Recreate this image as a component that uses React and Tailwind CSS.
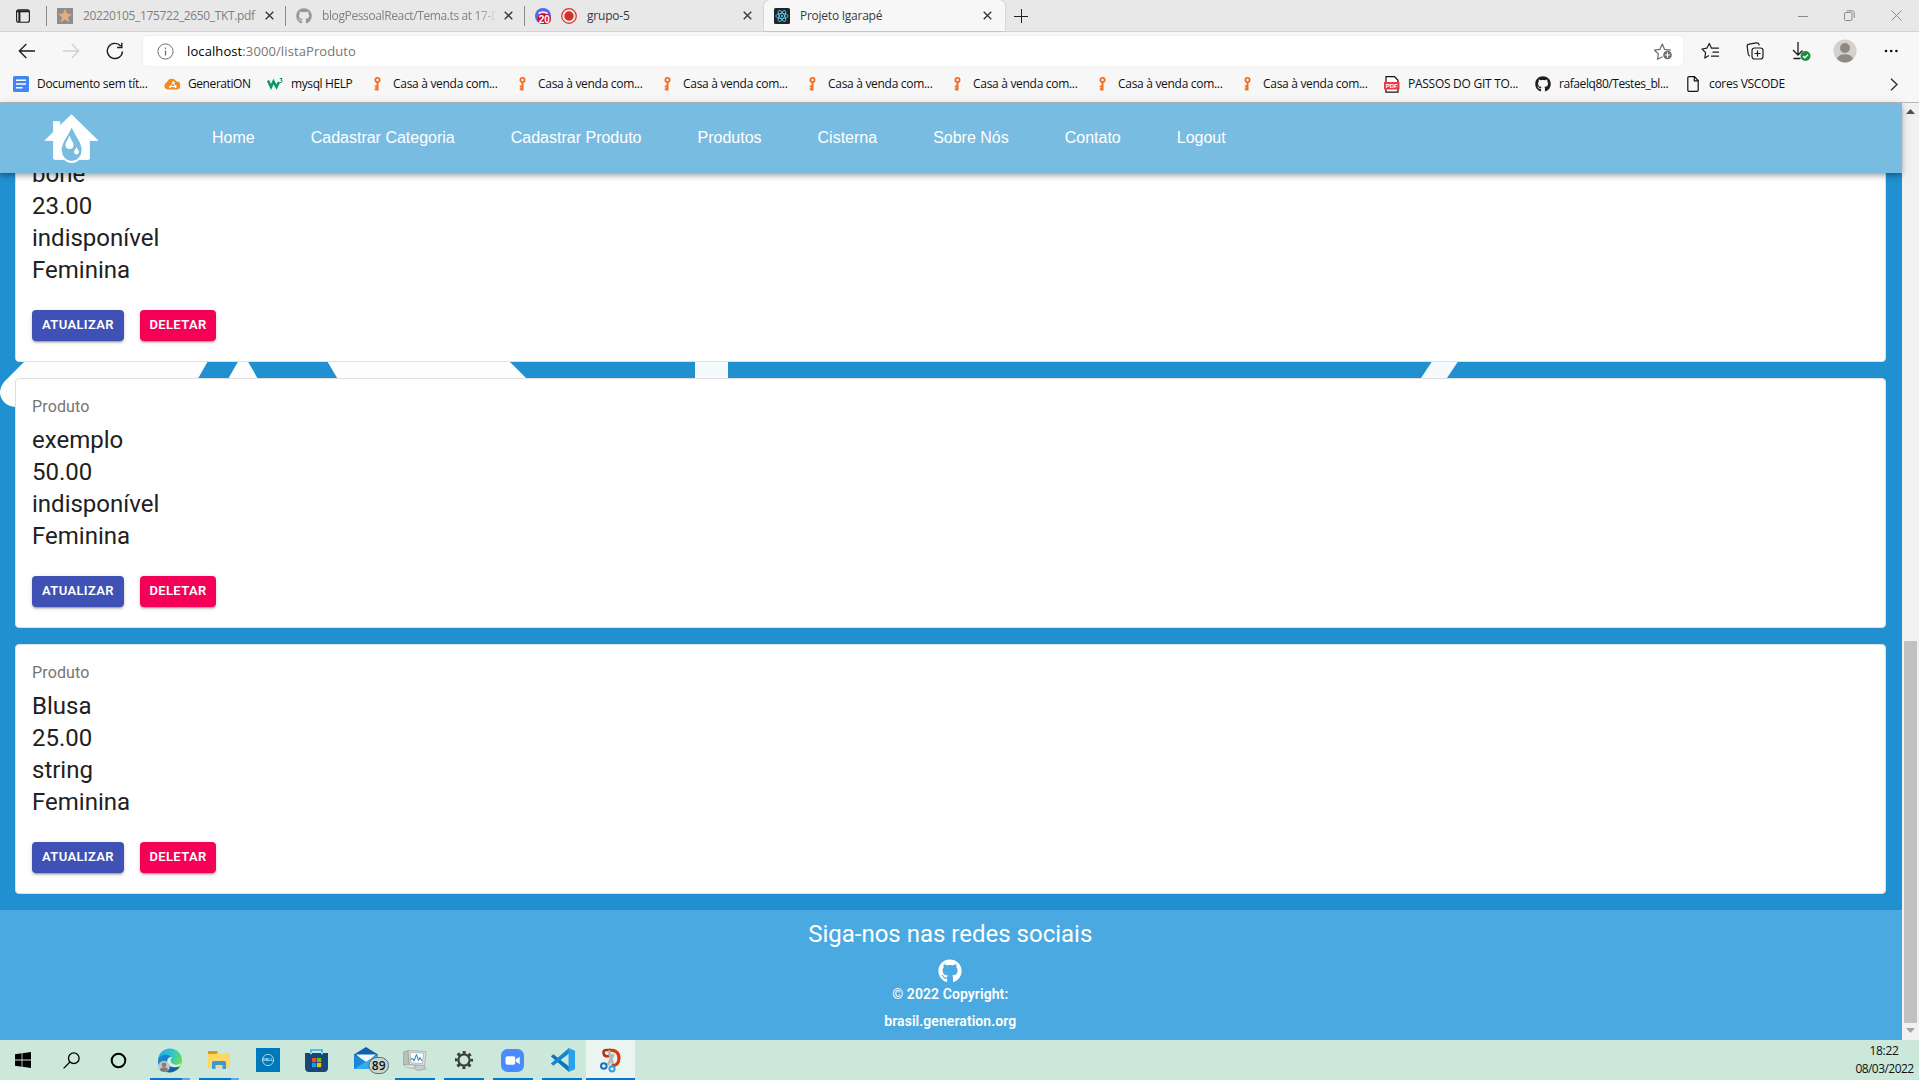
import React from "react";
import { FaGithub } from "react-icons/fa";

const UI = "font-['Open_Sans',sans-serif]";

function Close() {
  return (
    <svg width="9" height="9" viewBox="0 0 9 9" className="shrink-0" stroke="#333" strokeWidth="1.3">
      <path d="M.7.7l7.6 7.6M8.3.7L.7 8.3" />
    </svg>
  );
}

function Tab({ icons, title, titleClass, muted, active, fade }) {
  return (
    <div
      className={`flex h-full shrink-0 items-center pl-[10px] ${
        active ? "relative w-[241px] rounded-t-md bg-[#f7f7f7] pr-[13px] shadow-[0_0_2px_rgba(0,0,0,0.25)]" : "w-[239px] pr-[12px]"
      }`}
    >
      <div className="flex shrink-0 gap-[10px]">{icons}</div>
      <div
        className={`ml-[10px] min-w-0 flex-1 overflow-hidden whitespace-nowrap text-[12px] leading-4 ${titleClass} ${
          muted ? "text-[#808080]" : "text-[#3a3a3a]"
        } ${fade ? "mr-[6px] [mask-image:linear-gradient(to_right,black_88%,transparent_100%)]" : ""}`}
      >
        {title}
      </div>
      <Close />
    </div>
  );
}

function Key() {
  return (
    <svg width="16" height="16" viewBox="0 0 16 16" fill="none" stroke="#f36d21">
      <circle cx="8.5" cy="4" r="2.1" strokeWidth="1.8" />
      <path d="M8.5 6v8.5" strokeWidth="2" />
      <path d="M5.800 10.400h2.500M5.800 13.200h2.500" strokeWidth="2" />
    </svg>
  );
}

function Bookmark({ icon, label, width, spacing }) {
  return (
    <div className={`flex shrink-0 items-center gap-2 ${width}`}>
      <span className="flex w-4 shrink-0 justify-center">{icon}</span>
      <span className={`whitespace-nowrap ${spacing || "tracking-[-0.3px]"}`}>{label}</span>
    </div>
  );
}

function StarIcon({ children, color = "#1b1b1b" }) {
  return (
    <svg width="20" height="20" viewBox="0 0 20 20" fill="none" stroke={color} strokeWidth="1.2" strokeLinejoin="round" strokeLinecap="round">
      {children}
    </svg>
  );
}

function TabStrip() {
  return (
    <div className="flex h-8 items-center border-b border-[#d3d3d3] bg-[#e8e8e8]">
      <div className="flex w-[46px] items-center justify-center">
        <svg width="14" height="14" viewBox="0 0 14 14" fill="none" stroke="#1b1b1b" strokeWidth="1.1">
          <rect x=".6" y=".8" width="12.8" height="12.4" rx="2" />
          <path d="M1 2.200h12M3.400 3v10" strokeWidth="2" />
        </svg>
      </div>
      <div className="h-5 w-px bg-[#8a8a8a]" />
      <Tab
        muted
        titleClass="tracking-[-0.36px]"
        title="20220105_175722_2650_TKT.pdf"
        icons={
          <svg width="16" height="16" viewBox="0 0 16 16">
            <path fill="#8d8d8d" d="M0 0h16v16H0z" />
            <path fill="#e0b07c" d="M8 .8l1.900 4.800 5.100.3-4 3.300 1.400 5.200L8 11.600l-4.400 2.800L5 9.200 1 5.900l5.100-.3z" />
          </svg>
        }
      />
      <div className="-ml-px h-5 w-px bg-[#8a8a8a]" />
      <Tab muted fade titleClass="tracking-[-0.38px]" title="blogPessoalReact/Tema.ts at 17-D" icons={<FaGithub size={16} color="#979797" />} />
      <div className="-ml-px h-5 w-px bg-[#8a8a8a]" />
      <Tab
        titleClass="tracking-[-0.2px]"
        title="grupo-5"
        icons={
          <>
            <svg width="16" height="16" viewBox="0 0 16 16">
              <circle cx="8" cy="8" r="8" fill="#5865f2" />
              <path d="M3.500 5.500q4.500-3 9 0" stroke="#fff" fill="none" strokeWidth="1.600" />
              <rect x="2.500" y="6" width="13.500" height="10" rx="5" fill="#d40f19" />
              <text x="9.300" y="14.500" textAnchor="middle" fontSize="10" fontWeight="700" fontFamily="Liberation Sans" fill="#fff">20</text>
            </svg>
            <svg width="16" height="16" viewBox="0 0 16 16">
              <circle cx="8" cy="8" r="7.300" fill="none" stroke="#d93025" strokeWidth="1.200" />
              <circle cx="8" cy="8" r="4.700" fill="#d93025" />
            </svg>
          </>
        }
      />
      <Tab
        active
        titleClass="tracking-[-0.25px]"
        title="Projeto Igarapé"
        icons={
          <svg width="16" height="16" viewBox="0 0 16 16" fill="none" stroke="#61dafb" strokeWidth=".8">
            <rect width="16" height="16" rx="1.500" fill="#20232a" stroke="none" />
            <ellipse cx="8" cy="8" rx="6.200" ry="2.500" />
            <ellipse cx="8" cy="8" rx="6.200" ry="2.500" transform="rotate(60 8 8)" />
            <ellipse cx="8" cy="8" rx="6.200" ry="2.500" transform="rotate(120 8 8)" />
            <circle cx="8" cy="8" r="1" fill="#61dafb" stroke="none" />
          </svg>
        }
      />
      <svg width="14" height="14" viewBox="0 0 14 14" className="ml-[9px]" stroke="#222" strokeWidth="1">
        <path d="M7.500 0v14M0 7.500h14" />
      </svg>
      <div className="ml-auto flex items-center gap-[36px] pr-[17px]">
        <svg width="10" height="10" viewBox="0 0 10 10" stroke="#888"><path d="M0 5.500h10" /></svg>
        <svg width="11" height="11" viewBox="0 0 11 11" fill="none" stroke="#888">
          <rect x=".5" y="2.500" width="7.500" height="8" rx="1.200" />
          <path d="M2.800.8h5.200q2.200 0 2.200 2.200v5" />
        </svg>
        <svg width="11" height="11" viewBox="0 0 11 11" stroke="#888"><path d="M.5.5l10 10M10.500.5l-10 10" /></svg>
      </div>
    </div>
  );
}

function Toolbar() {
  return (
    <div className="flex h-[38px] items-center bg-[#f7f7f7]">
      <div className="flex w-[143px] items-center gap-[26px] pl-[18px]">
        <svg width="18" height="16" viewBox="0 0 18 16" fill="none" stroke="#1b1b1b" strokeWidth="1.300"><path d="M17 8H1.500M8.300 1L1.300 8l7 7" /></svg>
        <svg width="18" height="16" viewBox="0 0 18 16" fill="none" stroke="#cfcfcf" strokeWidth="1.300"><path d="M1 8h15.500M9.700 1l7 7-7 7" /></svg>
        <svg width="18" height="18" viewBox="0 0 18 18" fill="none" stroke="#1b1b1b" strokeWidth="1.400"><path d="M16.500 9.500A7.600 7.600 0 1 1 14.700 4M15.800.8v4.700h-4.700" /></svg>
      </div>
      <div className="flex h-[30px] w-[1540px] items-center rounded-[4px] bg-white pl-[14px] pr-[10px] shadow-[0_0_2px_rgba(0,0,0,0.1)]">
        <svg width="17" height="17" viewBox="0 0 17 17" fill="none" stroke="#6b6b6b"><circle cx="8.500" cy="8.500" r="7.600" /><path d="M8.500 7.500v5M8.500 4.500v1.400" strokeWidth="1.200" /></svg>
        <span className="ml-[13px] text-[13px] leading-5 tracking-[0.1px] text-[#767676]">
          <span className="text-black">localhost</span>:3000/listaProduto
        </span>
        <div className="ml-auto">
          <StarIcon color="#6b6b6b">
            <path d="M9 16l-4.500 2.300.9-5.400-3.900-3.700 5.300-.8L9.300 3l2.300 5.400 5.600.8" />
            <circle cx="14.500" cy="14" r="4.300" fill="#6b6b6b" stroke="none" />
            <path d="M14.500 11.800v4.400M12.300 14h4.400" stroke="#fff" />
          </StarIcon>
        </div>
      </div>
      <div className="flex flex-1 items-center pl-[18px]">
        <StarIcon>
          <path d="M7.500 14.800L3.800 17l.8-5.300L1 8l4.800-.8L8.300 2.500l2.200 4.700h7M12 11.200h5.500M10.500 15.200h7" />
        </StarIcon>
        <svg width="20" height="20" viewBox="0 0 20 20" className="ml-[24px]" fill="none" stroke="#1b1b1b" strokeWidth="1.200">
          <rect x="7" y="7" width="11" height="11" rx="2.500" />
          <path d="M12.500 9.500v6M9.500 12.500h6M4.800 15.200Q3.500 14.500 3.200 13L2.200 5.500Q2 3.500 4 3.200l7.500-1.400Q13.500 1.600 14 3.500l.2.800" />
        </svg>
        <svg width="20" height="20" viewBox="0 0 20 20" className="ml-[26px]" fill="none" stroke="#1b1b1b" strokeWidth="1.300">
          <path d="M7 1v12.500M2 9l5 5 4.500-4.500M2.500 17.500h7" />
          <circle cx="14.500" cy="15" r="5" fill="#1e8e3e" stroke="none" />
          <path d="M12 15l1.800 1.800 3.200-3.200" stroke="#fff" />
        </svg>
        <svg width="24" height="24" viewBox="0 0 24 24" className="ml-[22px]">
          <circle cx="12" cy="12" r="11.500" fill="#d3d0cd" />
          <circle cx="12" cy="9" r="5" fill="#8f8984" />
          <path d="M4 19.500Q6 15.200 12 15.200t8 4.300Q17 23.500 12 23.500T4 19.500z" fill="#8f8984" />
        </svg>
        <svg width="14" height="4" viewBox="0 0 14 4" className="ml-[27px]" fill="#111"><circle cx="2" cy="2" r="1.300" /><circle cx="7.200" cy="2" r="1.300" /><circle cx="12.400" cy="2" r="1.300" /></svg>
      </div>
    </div>
  );
}

function Bookmarks() {
  return (
    <div className="flex h-[33px] items-center border-b border-[#b9b9b9] bg-[#f7f7f7] pb-[4px] pl-[13px] text-[12px] text-[#111]">
      <Bookmark
        width="w-[151px]"
        label="Documento sem tít..."
        icon={
          <svg width="16" height="16" viewBox="0 0 16 16"><rect width="16" height="16" rx="1.500" fill="#4285f4" /><path d="M3 4.200h10M3 8h10M3 11.800h6.500" stroke="#fff" strokeWidth="1.600" /></svg>
        }
      />
      <Bookmark
        width="w-[103px]"
        label="GeneratiON"
        spacing="tracking-[-0.42px]"
        icon={
          <svg width="16" height="16" viewBox="0 0 16 16"><path d="M3.500 13.500A3.700 3.700 0 0 1 3 6.300 5.200 5.200 0 0 1 12.500 5.500 4 4 0 0 1 12.800 13.500z" fill="#f68a1f" /><path d="M6.500 10.500l3-4 2 4z" fill="none" stroke="#fff" /><circle cx="9.300" cy="6.500" r="1.200" fill="#fff" /><circle cx="6.300" cy="10.700" r="1.200" fill="#fff" /><circle cx="11.500" cy="10.700" r="1.200" fill="#fff" /></svg>
        }
      />
      <Bookmark
        width="w-[102px]"
        label="mysql HELP"
        spacing="tracking-[-0.4px]"
        icon={
          <svg width="16" height="16" viewBox="0 0 16 16" fill="none" stroke="#059862"><path d="M1 4.500l3 6.500L6.500 5.500l3 5.500 2.500-5" strokeWidth="2.500" /><path d="M12.800 2.500h2.400l-1.300 1.700q1.600.2 1.200 1.500t-2.300.8" strokeWidth="1" /></svg>
        }
      />
      {[0, 1, 2, 3, 4, 5, 6].map((i) => (
        <Bookmark key={i} width="w-[145px]" label="Casa à venda com..." icon={<Key />} />
      ))}
      <Bookmark
        width="w-[151px]"
        label="PASSOS DO GIT TO..."
        spacing="tracking-[-0.27px]"
        icon={
          <svg width="16" height="17" viewBox="0 0 16 17"><path d="M2 .7h8.500L14 4.300V16.200H2z" fill="#fff" stroke="#111" strokeWidth="1.200" /><path fill="#f4373b" d="M0 6h15.500v7.500H0z" /><text x="7.700" y="12.200" fontSize="6" fontWeight="700" textAnchor="middle" fontFamily="Liberation Sans" fill="#fff">PDF</text></svg>
        }
      />
      <Bookmark width="w-[150px]" spacing="tracking-[-0.42px]" label="rafaelq80/Testes_bl..." icon={<FaGithub size={16} color="#1b1f23" />} />
      <Bookmark
        width="w-[120px]"
        label="cores VSCODE"
        icon={
          <svg width="12" height="16" viewBox="0 0 12 16" fill="none" stroke="#111" strokeWidth="1.200"><path d="M.8 2Q.8.700 2 .700h5.500l3.700 3.800V14q0 1.300-1.300 1.300H2Q.8 15.300.8 14zM7.300.8v4h4" /></svg>
        }
      />
      <svg width="8" height="13" viewBox="0 0 8 13" className="ml-auto mr-[21px]" fill="none" stroke="#333" strokeWidth="1.400"><path d="M1 .7l6 5.800-6 5.800" /></svg>
    </div>
  );
}

const NAV = ["Home", "Cadastrar Categoria", "Cadastrar Produto", "Produtos", "Cisterna", "Sobre Nós", "Contato", "Logout"];

function SiteHeader() {
  return (
    <header className="relative z-10 flex h-[70px] shrink-0 items-center bg-[#79bce2] shadow-[0_2px_4px_-1px_rgba(0,0,0,0.2),0_4px_5px_0_rgba(0,0,0,0.14),0_1px_10px_0_rgba(0,0,0,0.12)]">
      <svg width="55" height="50" viewBox="0 0 55 50" className="ml-[44px] mt-px shrink-0">
        <path d="M27.500.7L54 26.500H45.500V44q0 1.500-1.500 1.500H11q-1.500 0-1.500-1.500V26.500H1L9.500 18V7.500h6.300v4.300z" fill="#fff" stroke="#fff" strokeWidth=".8" strokeLinejoin="round" />
        <path d="M27.700 13.500C24 22.500 17.500 28.500 17.500 37.500a10.200 10.200 0 0 0 20.400 0C37.900 28.500 31.400 22.500 27.700 13.500z" fill="#79bce2" />
        <path d="M17 36.500a10.700 11.500 0 0 0 21.400 0" fill="none" stroke="#fff" strokeWidth="1.800" />
        <path d="M25.500 21.500c-1.200 4-4 6.500-4 9.500a4 4 0 0 0 8 0c0-3-2.800-5.500-4-9.500zM32.500 33c-.8 2.200-2.400 3.200-2.400 5a2.400 2.400 0 0 0 4.800 0c0-1.800-1.600-2.800-2.400-5z" fill="#fff" />
      </svg>
      <nav className="ml-[113px] flex gap-14 whitespace-nowrap font-['Liberation_Sans',sans-serif] text-base leading-6 text-white">
        {NAV.map((n) => (
          <a key={n}>{n}</a>
        ))}
      </nav>
    </header>
  );
}

function Card({ lines }) {
  return (
    <article className="shrink-0 rounded-[4px] border border-[#dfdfdf] bg-white text-[#212121]">
      <div className="p-4">
        <p className="mb-[5.6px] text-base leading-6 tracking-[0.15px] text-[#757575]">Produto</p>
        {lines.map((l) => (
          <h5 key={l} className="text-2xl leading-[32px]">{l}</h5>
        ))}
      </div>
      <div className="p-2">
        <div className="mb-3 flex gap-4 px-2 text-[13px] font-semibold leading-[22.75px] tracking-[0.37px] text-white">
          <button className="h-[30.75px] w-[92px] rounded-[4px] bg-[#3f51b5] text-center shadow-[0_3px_1px_-2px_rgba(0,0,0,0.2),0_2px_2px_0_rgba(0,0,0,0.14),0_1px_5px_0_rgba(0,0,0,0.12)]">ATUALIZAR</button>
          <button className="h-[30.75px] w-[76px] rounded-[4px] bg-[#f50057] text-center shadow-[0_3px_1px_-2px_rgba(0,0,0,0.2),0_2px_2px_0_rgba(0,0,0,0.14),0_1px_5px_0_rgba(0,0,0,0.12)]">DELETAR</button>
        </div>
      </div>
    </article>
  );
}

function Backdrop() {
  return (
    <svg width="1902" height="737" viewBox="0 173 1902 737" className="absolute left-0 top-0">
      <path fill="#fcfefe" d="M26 360L4 382Q-4 393 4 402Q8 407 18 407H182L208.500 360z" />
      <path fill="#fcfefe" d="M243 353L220 393H266zM326.500 360L346 393H541L508 360z" />
      <path fill="#f5fafd" d="M695 350h33v40h-33zM1433 360h26l-20 30h-26z" />
    </svg>
  );
}

function Footer() {
  return (
    <footer className="flex h-[130px] shrink-0 flex-col items-center bg-[#4ba9e1] pr-[1.5px] pt-[8px] text-white">
      <h5 className="text-2xl leading-8">Siga-nos nas redes sociais</h5>
      <FaGithub size={24} className="mt-[9px]" />
      <p className="text-sm font-semibold leading-[22px] tracking-[0.08px]">© 2022 Copyright:</p>
      <p className="mt-[5px] text-sm font-semibold leading-[22px] tracking-[0.06px]">brasil.generation.org</p>
    </footer>
  );
}

function Scrollbar() {
  return (
    <div className="flex w-[17px] flex-col items-center bg-[#f1f1f1]">
      <svg width="9" height="5" viewBox="0 0 9 5" className="mt-[6px]"><path d="M0 5L4.500 0 9 5z" fill="#505050" /></svg>
      <div className="mt-[527px] h-[382px] w-[13px] bg-[#c1c1c1]" />
      <svg width="9" height="5" viewBox="0 0 9 5" className="mt-[5px]"><path d="M0 0l4.500 5L9 0z" fill="#a3a3a3" /></svg>
    </div>
  );
}

function Task({ children, open, multi, active }) {
  return (
    <div className={`flex h-10 w-[49px] shrink-0 flex-col items-center ${active ? "bg-[#eaf5f1]" : ""}`}>
      <div className="flex h-[38px] items-center justify-center pt-[2px]">{children}</div>
      {open && (
        <div className={`flex h-[2px] bg-[#0078d7] ${active ? "w-full" : "w-10"}`}>
          {multi && <div className="ml-auto w-2 bg-[#62a8e4]" />}
        </div>
      )}
    </div>
  );
}

function Taskbar() {
  return (
    <div className="flex h-10 bg-[#cbe8db]">
      <div className="flex w-[145px] items-center">
        <svg width="16" height="16" viewBox="0 0 16 16" className="ml-[15px]"><path d="M0 2.300L6.600 1.300V7.600H0zM7.400 1.200L16 0V7.600H7.400zM0 8.400h6.600v6.300L0 13.700zM7.400 8.400H16V16l-8.600-1.200z" /></svg>
        <svg width="17" height="17" viewBox="0 0 17 17" className="ml-[32px]" fill="none" stroke="#000" strokeWidth="1.300"><circle cx="10.800" cy="6.200" r="5.300" /><path d="M7 10L.6 16.400" /></svg>
        <svg width="17" height="17" viewBox="0 0 17 17" className="ml-[30px]" fill="none" stroke="#000" strokeWidth="2"><circle cx="8.500" cy="8.500" r="6.800" /></svg>
      </div>
      <Task open multi>
        <svg width="26" height="25" viewBox="0 0 26 25">
          <defs>
            <linearGradient id="edgeTop" x1="0" y1="0" x2="1" y2=".4"><stop offset="0" stopColor="#2aa4dd" /><stop offset=".55" stopColor="#30c2ce" /><stop offset="1" stopColor="#65df55" /></linearGradient>
            <linearGradient id="edgeLow" x1="0" y1="0" x2="1" y2="1"><stop offset="0" stopColor="#1b94d8" /><stop offset="1" stopColor="#0c4fa0" /></linearGradient>
          </defs>
          <circle cx="13" cy="12.500" r="12" fill="url(#edgeTop)" />
          <path d="M1 12c2-6 10-6.500 13-3-3 0-4.500 2.500-3.500 5.500 1.200 4 7 5.500 12.500 3.500-3 5-8 6.800-12 6.300C4.500 23.500.5 18 1 12z" fill="url(#edgeLow)" />
          <path d="M15.500 9c-3 2-2.500 6.500 2 7.500 3 .6 5.500-.5 6.500-1.500l-.8 3c-4.500 2.500-10.500 1.500-12.500-2.500-1.500-3 .5-7 4.800-6.500z" fill="#d9eee8" />
          <circle cx="7" cy="18.500" r="5.700" fill="#c6c6c6" />
          <circle cx="7" cy="16.700" r="2.300" fill="#7d7d7d" />
          <path d="M3 22.200q0-3 4-3t4 3q-4 3.600-8 0z" fill="#7d7d7d" />
        </svg>
      </Task>
      <Task open multi>
        <svg width="22" height="19" viewBox="0 0 22 19"><path d="M0 1q0-1 1-1h8l1.500 2H21q1 0 1 1v13q0 1-1 1H1q-1 0-1-1z" fill="#ffd767" /><path d="M0 3V1q0-1 1-1h8l.8 1.500L8.500 3z" fill="#d79a12" /><path d="M4 18v-6.500Q4 10 5.500 10h11Q18 10 18 11.500V18h-3.500v-4h-7v4z" fill="#3c96dc" /></svg>
      </Task>
      <Task>
        <svg width="24" height="24" viewBox="0 0 24 24"><path fill="#0078bc" d="M0 0h24v24H0z" /><circle cx="12" cy="12" r="5.600" fill="none" stroke="#b9dcef" strokeWidth=".9" /><text x="12" y="13.400" fontSize="3.800" textAnchor="middle" fontWeight="700" fontFamily="Liberation Sans" fill="#d6ebf6">DELL</text></svg>
      </Task>
      <Task>
        <svg width="23" height="23" viewBox="0 0 23 23"><path d="M6 6V1h11v5" fill="none" stroke="#28b4ec" strokeWidth="1.700" /><path d="M0 4h23v14.500q0 4.500-4 4.500H4q-4 0-4-4.500z" fill="#1a4577" /><path d="M5 4.300h2M16 4.300h2" stroke="#7ddcff" strokeWidth="2" /><path fill="#f25022" d="M7 9h4.200v4.200H7z" /><path fill="#7fba00" d="M12 9h4.200v4.200H12z" /><path fill="#00a4ef" d="M7 14h4.200v4.200H7z" /><path fill="#ffb900" d="M12 14h4.200v4.200H12z" /></svg>
      </Task>
      <Task>
        <svg width="36" height="28" viewBox="0 0 36 28" className="ml-[12px]">
          <path d="M0 8.500L12 1l12 7.500V23H0z" fill="#0f61b0" />
          <path d="M2 8.500h20L12 17z" fill="#f1f6f8" />
          <path d="M0 8.500L24 23H0z" fill="#1b87d8" />
          <path d="M24 8.500L0 23h24z" fill="#34acef" />
          <rect x="15" y="11.500" width="19.500" height="16" rx="8" fill="#c9d6d0" stroke="#5d6864" />
          <text x="24.700" y="23.700" fontSize="12" textAnchor="middle" fontWeight="600" fontFamily="Open Sans" fill="#111">89</text>
        </svg>
      </Task>
      <Task open>
        <svg width="24" height="22" viewBox="0 0 24 22" stroke="#929896" strokeWidth=".6">
          <path d="M.5 3l5-1.500v14l-5 .5z" fill="#b9bfbd" />
          <path d="M0 15.500l11 .5 2 3.500-9-1z" fill="#e4e6e5" />
          <path d="M13 15l8 1 2 4-8 1.500-4-2z" fill="#c7cbca" />
          <path d="M5 1.500l18 1-1.500 14L6.500 15.500z" fill="#dfe3e2" />
          <path d="M7 3.300l13.700.8-1.200 10.400L8 13.700z" fill="#fff" />
          <path d="M7.500 11l2-2 1.500 3 2.500-6.500 2 6 1.500-3 2 3.500" fill="none" stroke="#2377b5" strokeWidth="1" />
        </svg>
      </Task>
      <Task open>
        <svg width="20" height="20" viewBox="0 0 20 20" fill="none" stroke="#3c3c3c">
          <circle cx="10" cy="10" r="5.600" strokeWidth="2.200" />
          <circle cx="10" cy="10" r="7.700" strokeWidth="2.700" strokeDasharray="3 3.048" strokeDashoffset="1.500" />
        </svg>
      </Task>
      <Task open>
        <svg width="23" height="23" viewBox="0 0 23 23"><rect width="23" height="23" rx="6.500" fill="#4a8cff" /><rect x="4.500" y="7.200" width="9.800" height="8.600" rx="2" fill="#fff" /><path d="M15 10.300l3.700-2.500v7.400L15 12.700z" fill="#fff" /></svg>
      </Task>
      <Task open>
        <svg width="24" height="24" viewBox="0 0 24 24" className="ml-[2px]">
          <path d="M0 8.300L2.300 6.300 18 18.500V24L.2 8.800z" fill="#0a76be" />
          <path d="M0 15.700l2.300 2L18 5.500V0L.2 15.200z" fill="#1389cd" />
          <path d="M17.500 0L24 2.800v18.400L17.500 24z" fill="#27a3ee" />
        </svg>
      </Task>
      <Task open active>
        <svg width="22" height="25" viewBox="0 0 22 25" fill="none">
          <path d="M9 2Q19 2 19 10t-7.500 7.500" stroke="#d13d0d" strokeWidth="3.200" />
          <path d="M10 2.300Q3 1 3.500 5T9 8" stroke="#b93010" strokeWidth="2.600" />
          <path d="M8.500 2.500L13 16M13.500 6L8 17" stroke="#b4b8ba" strokeWidth="2.800" />
          <circle cx="3.800" cy="18" r="2.800" stroke="#1670be" strokeWidth="2" />
          <circle cx="12" cy="20.800" r="2.600" stroke="#2b9fe5" strokeWidth="2" />
        </svg>
      </Task>
      <div className="ml-auto w-[64px] pt-[2px] text-center text-[12px] leading-[18px] tracking-[-0.55px] text-[#111]">
        <div className="-ml-[6px] tracking-[-0.35px]">18:22</div>
        <div className="-ml-[5px] whitespace-nowrap">08/03/2022</div>
      </div>
    </div>
  );
}

export default function App() {
  return (
    <div className={`flex h-[1080px] w-[1919px] flex-col overflow-hidden ${UI}`}>
      <TabStrip />
      <Toolbar />
      <Bookmarks />
      <div className="flex h-[937px]">
        <div className="flex w-[1902px] flex-col font-['Roboto',sans-serif]">
          <SiteHeader />
          <main className="relative h-[737px] overflow-hidden bg-[#2190d1]">
            <Backdrop />
            <div className="relative flex h-full flex-col justify-end gap-4 pb-[15.8px] pl-[15px] pr-4">
              <Card lines={["bone", "23.00", "indisponível", "Feminina"]} />
              <Card lines={["exemplo", "50.00", "indisponível", "Feminina"]} />
              <Card lines={["Blusa", "25.00", "string", "Feminina"]} />
            </div>
          </main>
          <Footer />
        </div>
        <Scrollbar />
      </div>
      <Taskbar />
    </div>
  );
}
